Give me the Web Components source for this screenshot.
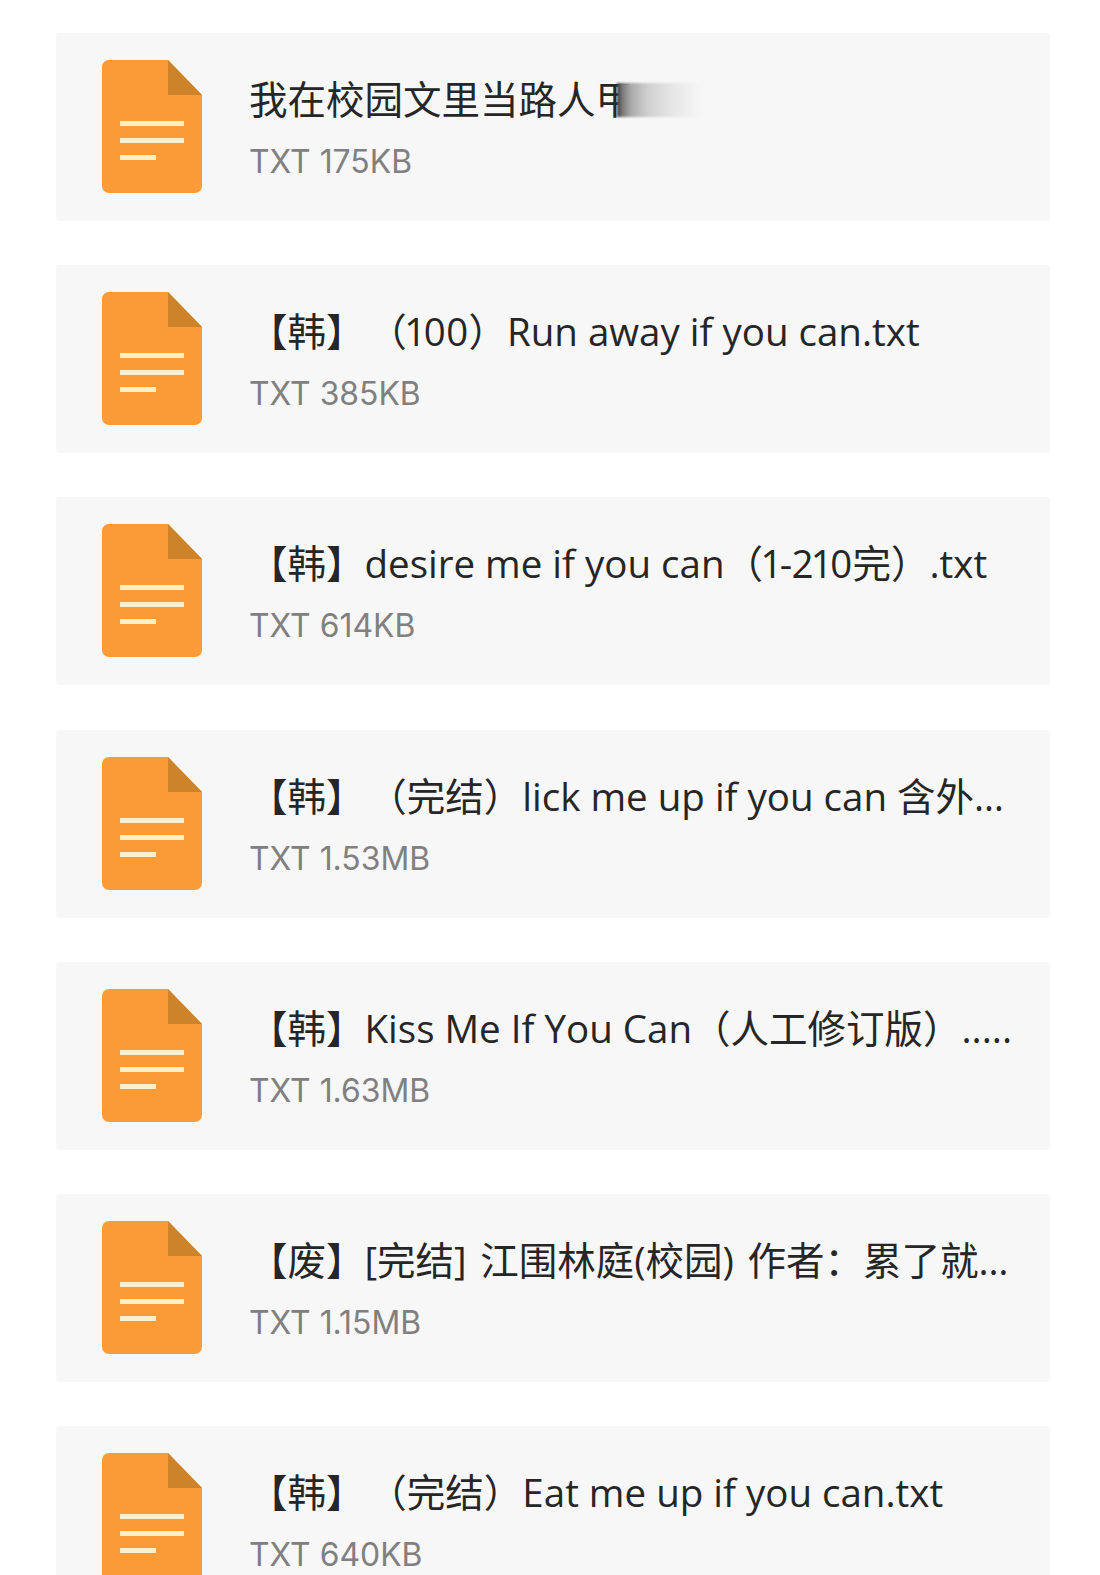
<!DOCTYPE html>
<html lang="zh-CN">
<head>
<meta charset="utf-8">
<title>files</title>
<style>
    html, body { margin: 0; padding: 0; background: #fff; overflow: hidden; }
    body { font-family: "Open Sans", "Noto Sans CJK SC", sans-serif; }
</style>
</head>
<body>
<file-list>
    <file-row size="TXT 175KB">我在校园文里当路人甲<blur-mask slot="mask"></blur-mask></file-row>
    <file-row size="TXT 385KB">【韩】&#8202;（100）Run away if you can.txt</file-row>
    <file-row size="TXT 614KB">【韩】desire me if you can（1-210完）.txt</file-row>
    <file-row size="TXT 1.53MB">【韩】&#8202;（完结）lick me up if you can 含外…</file-row>
    <file-row size="TXT 1.63MB">【韩】Kiss Me If You Can（人工修订版）.....</file-row>
    <file-row size="TXT 1.15MB" style="--word-gap: 3.5px">【废】[完结] 江围林庭(校园) 作者：累了就…</file-row>
    <file-row size="TXT 640KB">【韩】&#8202;（完结）Eat me up if you can.txt</file-row>
</file-list>

<script>
class FileList extends HTMLElement {
    constructor() {
        super();
        const shadow = this.attachShadow({ mode: "open" });
        shadow.innerHTML = `
            <style>
                :host {
                    display: flex;
                    flex-direction: column;
                    gap: 44.2px;
                    padding: 33px 50px 0 56px;
                }
            </style>
            <slot></slot>
        `;
    }
}

class FileIcon extends HTMLElement {
    constructor() {
        super();
        const shadow = this.attachShadow({ mode: "open" });
        shadow.innerHTML = `
            <style>
                :host { display: block; width: 100px; height: 134px; flex: none; }
                svg { display: block; }
            </style>
            <svg width="100" height="134" viewBox="0 0 100 134">
                <path d="M7 0H66L100 35V126a7 7 0 0 1-7 7H7a7 7 0 0 1-7-7V7a7 7 0 0 1 7-7Z" fill="#fb9b38"/>
                <path d="M66 0L100 35H66Z" fill="#cd8329"/>
                <g fill="#ffefc6">
                    <rect x="18" y="61" width="64" height="5"/>
                    <rect x="18" y="78" width="64" height="5"/>
                    <rect x="18" y="95" width="36" height="5"/>
                </g>
            </svg>
        `;
    }
}

class BlurMask extends HTMLElement {
    constructor() {
        super();
        const shadow = this.attachShadow({ mode: "open" });
        shadow.innerHTML = `
            <style>
                :host {
                    position: absolute;
                    left: 561px;
                    top: 50px;
                    width: 86px;
                    height: 34px;
                    background: linear-gradient(90deg, #3c3c3c 0, #777 5px, #aaa 14px, #cfcfcf 30px, #e6e6e6 55px, #f7f7f7 86px);
                    filter: blur(1px);
                }
            </style>
        `;
    }
}

class FileRow extends HTMLElement {
    constructor() {
        super();
        const shadow = this.attachShadow({ mode: "open" });
        shadow.innerHTML = `
            <style>
                :host {
                    display: flex;
                    position: relative;
                    box-sizing: border-box;
                    height: 188px;
                    padding: 27px 0 0 46px;
                    gap: 47px;
                    background: #f7f7f7;
                    border-radius: 3px;
                    font-family: "Open Sans", "Noto Sans CJK SC", sans-serif;
                }
                .text { padding-top: 15px; min-width: 0; }
                .title {
                    font-size: 38.5px;
                    line-height: 48px;
                    color: #262626;
                    white-space: nowrap;
                    word-spacing: var(--word-gap, 0);
                    font-variant-numeric: proportional-nums;
                }
                .size {
                    margin-top: 19px;
                    font-family: Inter, sans-serif;
                    font-size: 31.9px;
                    line-height: 40px;
                    color: #808080;
                }
            </style>
            <file-icon></file-icon>
            <div class="text">
                <div class="title"><slot></slot></div>
                <div class="size"></div>
            </div>
            <slot name="mask"></slot>
        `;
        shadow.querySelector(".size").textContent = this.getAttribute("size");
    }
}

customElements.define("file-list", FileList);
customElements.define("file-icon", FileIcon);
customElements.define("blur-mask", BlurMask);
customElements.define("file-row", FileRow);
</script>
</body>
</html>
